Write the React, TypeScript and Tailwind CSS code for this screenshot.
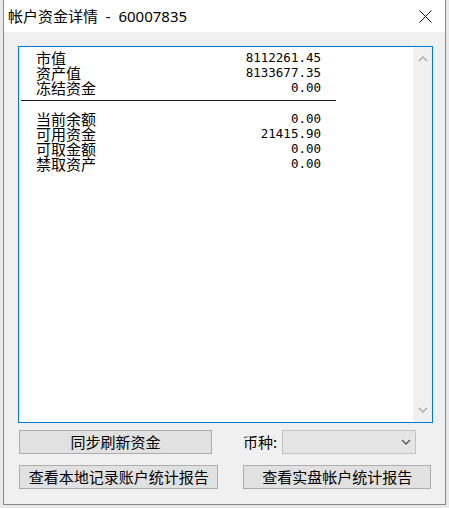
const cjk = "font-['Microsoft_YaHei','Noto_Sans_CJK_SC',sans-serif]";
const titleFont = "font-['Noto_Sans','Noto_Sans_CJK_SC',sans-serif]";

const groupA = [
  { label: "市值", value: "8112261.45" },
  { label: "资产值", value: "8133677.35" },
  { label: "冻结资金", value: "0.00" },
];

const groupB = [
  { label: "当前余额", value: "0.00" },
  { label: "可用资金", value: "21415.90" },
  { label: "可取金额", value: "0.00" },
  { label: "禁取资产", value: "0.00" },
];

const Row = ({ label, value }: { label: string; value: string }) => (
  <div className="flex h-[15px] items-center justify-between pl-[15px] pr-[15px]">
    <span className={`${cjk} text-[15px] leading-[15px] text-black`}>{label}</span>
    <span className="font-['DejaVu_Sans_Mono',monospace] text-[12.5px] leading-[15px] text-black">
      {value}
    </span>
  </div>
);

const Chevron = ({ up, color }: { up?: boolean; color: string }) => (
  <svg width="10" height="6" viewBox="0 0 10 6">
    <path
      d={up ? "M1 5 L5 1 L9 5" : "M1 1 L5 5 L9 1"}
      fill="none"
      stroke={color}
      strokeWidth="1.3"
    />
  </svg>
);

export default function App() {
  return (
    <div className="flex h-[508px] w-[449px] bg-[#e9e9e9] pl-[3px]">
      <div className="flex h-[505px] w-[443px] flex-col border border-t-0 border-[#8a8a8a] bg-[#f0f0f0]">
        {/* title bar */}
        <div className="flex h-[32px] items-center justify-between bg-white pl-[4px] pr-[13px]">
          <span className={`${titleFont} whitespace-pre text-[15px] text-black`}>帐户资金详情  -  60007835</span>
          <svg width="13" height="13" viewBox="0 0 13 13">
            <path d="M0.5 0.5 L12.5 12.5 M12.5 0.5 L0.5 12.5" stroke="#111" strokeWidth="1" />
          </svg>
        </div>

        <div className="flex flex-col px-[14px] pt-[14px]">
          {/* list box */}
          <div className="flex h-[377px] w-[415px] border border-[#0078d7] bg-white">
            <div className="flex flex-1 flex-col pt-[3px]">
              <div className="w-[317px] pl-[2px]">
                {groupA.map((r) => (
                  <Row key={r.label} {...r} />
                ))}
                <div className="mt-[5px] h-px bg-[#1a1a1a]" />
                <div className="mt-[10px]">
                  {groupB.map((r) => (
                    <Row key={r.label} {...r} />
                  ))}
                </div>
              </div>
            </div>
            <div className="flex w-[19px] flex-col items-center justify-between bg-[#f0f0f0] py-[9px]">
              <Chevron up color="#a8a8a8" />
              <Chevron color="#a8a8a8" />
            </div>
          </div>

          {/* first button row */}
          <div className="mt-[7px] flex items-center">
            <button
              className={`${cjk} ml-px flex h-[24px] w-[193px] items-center justify-center border border-[#adadad] bg-[#e1e1e1] text-[15px] text-black`}
            >
              同步刷新资金
            </button>
            <span className={`${cjk} ml-[31px] text-[15px] text-black`}>币种:</span>
            <div className="ml-[5px] flex h-[24px] w-[134px] items-center justify-end border border-[#c3c3c3] bg-[#e5e5e5] pr-[4px]">
              <Chevron color="#555" />
            </div>
          </div>

          {/* second button row */}
          <div className="mt-[11px] flex items-center">
            <button
              className={`${cjk} ml-px flex h-[24px] w-[200px] items-center justify-center border border-[#adadad] bg-[#e1e1e1] text-[15px] text-black`}
            >
              查看本地记录账户统计报告
            </button>
            <button
              className={`${cjk} ml-[25px] flex h-[24px] w-[188px] items-center justify-center border border-[#adadad] bg-[#e1e1e1] text-[15px] text-black`}
            >
              查看实盘帐户统计报告
            </button>
          </div>
        </div>
      </div>
    </div>
  );
}
